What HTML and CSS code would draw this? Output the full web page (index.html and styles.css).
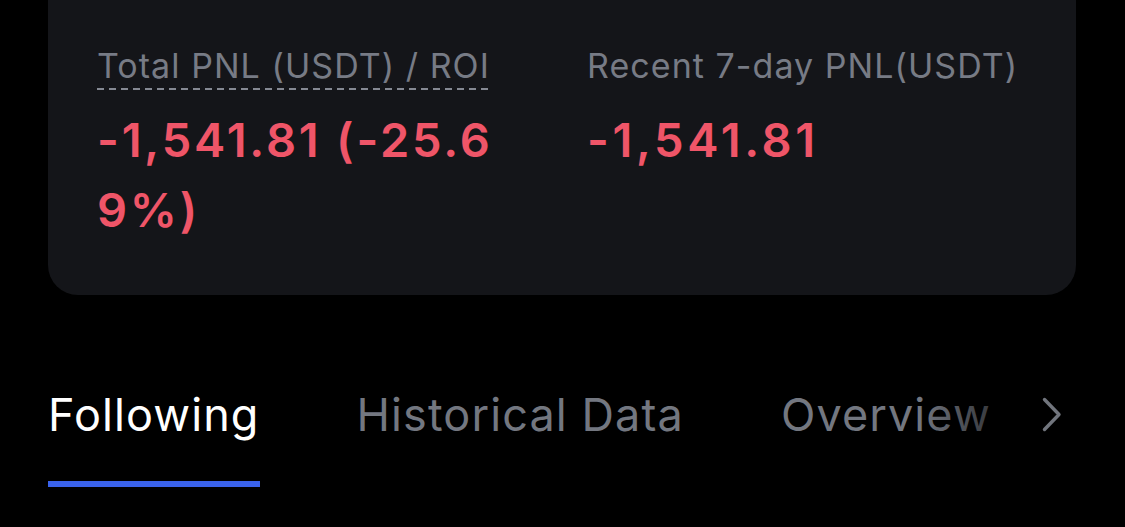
FILE: index.html
```html
<!DOCTYPE html>
<html>
<head>
<meta charset="utf-8">
<link rel="stylesheet" href="styles.css">
</head>
<body>
<div class="page">
  <section class="card">
    <div class="stat stat-total">
      <div class="label dashed">Total PNL (USDT) / ROI</div>
      <div class="value">-1,541.81 (-25.69%)</div>
    </div>
    <div class="stat stat-recent">
      <div class="label">Recent 7-day PNL(USDT)</div>
      <div class="value">-1,541.81</div>
    </div>
  </section>
  <nav class="tabs">
    <div class="tab-scroll">
      <div class="tab active">Following</div>
      <div class="tab">Historical Data</div>
      <div class="tab">Overview</div>
      <div class="fade"></div>
    </div>
    <div class="chevron">
      <svg width="20" height="36" viewBox="0 0 20 36" fill="none">
        <path d="M2.5 2.5 L17 17.5 L2.5 32.5" stroke="#71757d" stroke-width="3.4" stroke-linecap="round" stroke-linejoin="round"/>
      </svg>
    </div>
  </nav>
</div>
</body>
</html>
```

FILE: styles.css
```css
* { box-sizing: border-box; }
html, body {
  margin: 0;
  padding: 0;
  background: #000;
}
body {
  font-family: Inter, "Noto Sans", "Liberation Sans", sans-serif;
  width: 1125px;
  height: 527px;
  overflow: hidden;
}
.page {
  display: flex;
  flex-direction: column;
}
.card {
  margin: 0 49px 0 48px;
  height: 295px;
  background: #141519;
  border-radius: 0 0 30px 30px;
  padding: 46px 0 0 49px;
  display: grid;
  grid-template-columns: 398px auto;
  column-gap: 92px;
  align-items: start;
}
.label {
  font-size: 34px;
  line-height: 40px;
  color: #777b85;
  font-weight: 400;
  letter-spacing: 1.05px;
  white-space: nowrap;
  display: inline-block;
  padding-bottom: 6px;
}
.dashed {
  background-image: linear-gradient(to right, #858993 0 55%, transparent 55% 100%);
  background-size: 12px 2px;
  background-repeat: repeat-x;
  background-position: 0 42px;
}
.value {
  margin-top: 13px;
  font-size: 47px;
  line-height: 70px;
  font-weight: 600;
  letter-spacing: 2.8px;
  color: #ef5568;
  word-break: break-all;
}
.stat-recent .value {
  letter-spacing: 3.6px;
}
.tabs {
  display: flex;
  align-items: flex-start;
  margin-top: 90px;
  padding-left: 48px;
}
.tab-scroll {
  position: relative;
  display: flex;
  gap: 97px;
  width: 960px;
  overflow: hidden;
}
.tab {
  font-size: 45px;
  line-height: 60px;
  color: #737780;
  white-space: nowrap;
  padding-bottom: 42px;
  letter-spacing: 1.1px;
}
.tab.active {
  color: #fff;
  border-bottom: 6px solid #3a63ec;
  padding-bottom: 36px;
}
.fade {
  position: absolute;
  top: 0;
  right: 0;
  width: 90px;
  height: 70px;
  background: linear-gradient(to right, rgba(0,0,0,0), rgba(0,0,0,0.45) 70%, rgba(0,0,0,0.6));
}
.chevron {
  margin-left: 34px;
  padding-top: 12px;
}
```
